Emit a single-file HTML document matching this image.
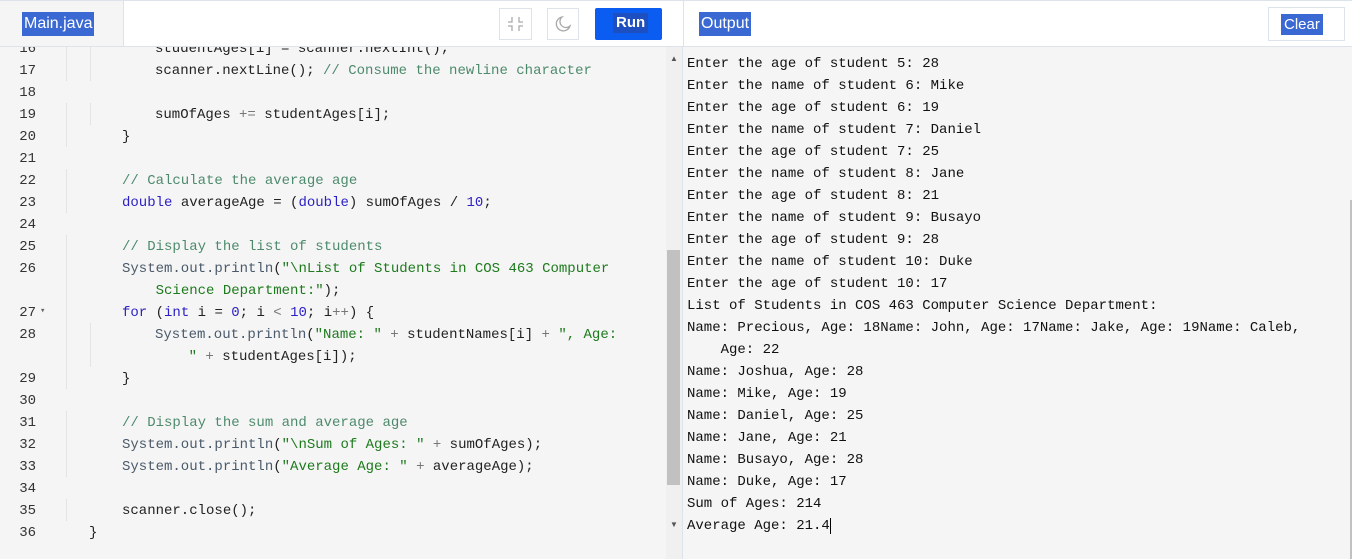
<!DOCTYPE html>
<html><head><meta charset="utf-8"><style>
*{margin:0;padding:0;box-sizing:border-box}
body{width:1352px;height:559px;overflow:hidden;background:#f5f5f5;font-family:"Liberation Sans",sans-serif;position:relative}
.hdr{position:absolute;top:0;height:47px;background:#fff;border-top:1px solid #dde3ea;border-bottom:1px solid #dde3ea}
.tag{position:absolute;background:#3a69d3;color:#fff;font-size:16px;padding:2px 2px;line-height:20px}
.mono{font-family:"Liberation Mono",monospace;font-size:14px}
.code{position:absolute;left:0;top:0;width:666px;height:559px;overflow:hidden}
.ln{position:absolute;left:0;width:36px;text-align:right;color:#333;font-size:14px}
.ll{position:absolute;white-space:pre;color:#222}
.g{position:absolute;width:1px;background:#e4e4e4}
.c{color:#4d8a6c}.k{color:#2a1fc2}.s{color:#1d7a1d}.o{color:#4a5a6a}.n{color:#2a1fc2}.p{color:#777}
.out{position:absolute;left:687px;top:53px;white-space:pre;color:#111;line-height:22px}
</style></head><body>
<div class="code mono">
<div id="lines"></div>
</div>
<div class="hdr" style="left:0;width:123px;background:#f5f5f5;border-top:1px solid #dde3ea"></div>
<div class="hdr" style="left:123px;width:560px;border-left:1px solid #dde3ea"></div>
<div class="tag" style="left:22px;top:12px">Main.java</div>
<div style="position:absolute;left:499px;top:8px;width:33px;height:32px;border:1px solid #dde3ea;background:#fff">
<svg width="31" height="30" viewBox="0 0 31 30" fill="none" stroke="#aaa" stroke-width="1.3"><path d="M12 8v5H8M19 8v5h4M12 22v-5H8M19 22v-5h4"/></svg></div>
<div style="position:absolute;left:547px;top:8px;width:32px;height:32px;border:1px solid #dde3ea;background:#fff">
<svg width="30" height="30" viewBox="0 0 30 30" fill="none" stroke="#aaa" stroke-width="1.3"><path d="M14 8a7 7 0 1 0 8 9a6 6 0 0 1-8-9z"/></svg></div>
<div style="position:absolute;left:595px;top:8px;width:67px;height:32px;background:#0b5cf0;border-radius:2px"><span style="position:absolute;left:18px;top:5px;background:#1d4fc0;color:#fff;font-weight:bold;font-size:15px;padding:0 3px;line-height:20px">Run</span></div>
<div class="hdr" style="left:683px;width:669px;border-left:1px solid #dde3ea"></div>
<div class="tag" style="left:699px;top:12px">Output</div>
<div style="position:absolute;left:1268px;top:7px;width:77px;height:34px;border:1px solid #dde3ea;background:#fff"><span style="position:absolute;left:12px;top:6px;background:#3a69d3;color:#fff;font-size:15px;padding:0 3px;line-height:21px">Clear</span></div>
<div style="position:absolute;left:666px;top:47px;width:16px;height:512px;background:#f0f0f0"></div>
<div style="position:absolute;left:667px;top:250px;width:13px;height:235px;background:#c1c1c1"></div>
<div style="position:absolute;left:670px;top:54px;font-size:8px;color:#555">▲</div>
<div style="position:absolute;left:670px;top:520px;font-size:8px;color:#555">▼</div>
<div style="position:absolute;left:682px;top:47px;width:1px;height:512px;background:#dde3ea"></div>
<div style="position:absolute;left:1350px;top:200px;width:2px;height:359px;background:#c1c1c1"></div>
<div class="out mono">Enter the age of student 5: 28
Enter the name of student 6: Mike
Enter the age of student 6: 19
Enter the name of student 7: Daniel
Enter the age of student 7: 25
Enter the name of student 8: Jane
Enter the age of student 8: 21
Enter the name of student 9: Busayo
Enter the age of student 9: 28
Enter the name of student 10: Duke
Enter the age of student 10: 17
List of Students in COS 463 Computer Science Department:
Name: Precious, Age: 18Name: John, Age: 17Name: Jake, Age: 19Name: Caleb,
    Age: 22
Name: Joshua, Age: 28
Name: Mike, Age: 19
Name: Daniel, Age: 25
Name: Jane, Age: 21
Name: Busayo, Age: 28
Name: Duke, Age: 17
Sum of Ages: 214
Average Age: 21.4<span style="border-left:1px solid #000"></span></div>
<script>
var L=[
[16,2,'studentAges[i] = scanner.nextInt();'],
[17,2,'scanner.nextLine(); <span class="c">// Consume the newline character</span>'],
[18,-1,''],
[19,2,'sumOfAges <span class="p">+=</span> studentAges[i];'],
[20,1,'}'],
[21,-1,''],
[22,1,'<span class="c">// Calculate the average age</span>'],
[23,1,'<span class="k">double</span> averageAge = (<span class="k">double</span>) sumOfAges / <span class="n">10</span>;'],
[24,-1,''],
[25,1,'<span class="c">// Display the list of students</span>'],
[26,1,'<span class="o">System.out.println</span>(<span class="s">"\\nList of Students in COS 463 Computer</span>'],
[0,1,'    <span class="s">Science Department:"</span>);'],
['27',1,'<span class="k">for</span> (<span class="k">int</span> i = <span class="n">0</span>; i <span class="p">&lt;</span> <span class="n">10</span>; i<span class="p">++</span>) {'],
[28,2,'<span class="o">System.out.println</span>(<span class="s">"Name: "</span> <span class="p">+</span> studentNames[i] <span class="p">+</span> <span class="s">", Age:</span>'],
[0,2,'    <span class="s">"</span> <span class="p">+</span> studentAges[i]);'],
[29,1,'}'],
[30,-1,''],
[31,1,'<span class="c">// Display the sum and average age</span>'],
[32,1,'<span class="o">System.out.println</span>(<span class="s">"\\nSum of Ages: "</span> <span class="p">+</span> sumOfAges);'],
[33,1,'<span class="o">System.out.println</span>(<span class="s">"Average Age: "</span> <span class="p">+</span> averageAge);'],
[34,-1,''],
[35,1,'scanner.close();'],
[36,0,'}']];
var h='',y=37;
L.forEach(function(r){
 if(r[0]!==0)h+='<div class="ln" style="top:'+(y+4)+'px">'+r[0]+'</div>';
 if(typeof r[0]=='string')h+='<div style="position:absolute;left:40px;top:'+(y+5)+'px;font-size:9px;color:#666">▾</div>';
 var lv=r[1];
 if(lv>=1)h+='<div class="g" style="left:66px;top:'+y+'px;height:22px"></div>';
 if(lv>=2)h+='<div class="g" style="left:90px;top:'+y+'px;height:22px"></div>';
 var x=lv<0?0:(lv==0?89:(lv==1?122:155));
 h+='<div class="ll" style="left:'+x+'px;top:'+(y+4)+'px">'+r[2]+'</div>';
 y+=22;
});
document.getElementById('lines').innerHTML=h;
</script>
</body></html>
